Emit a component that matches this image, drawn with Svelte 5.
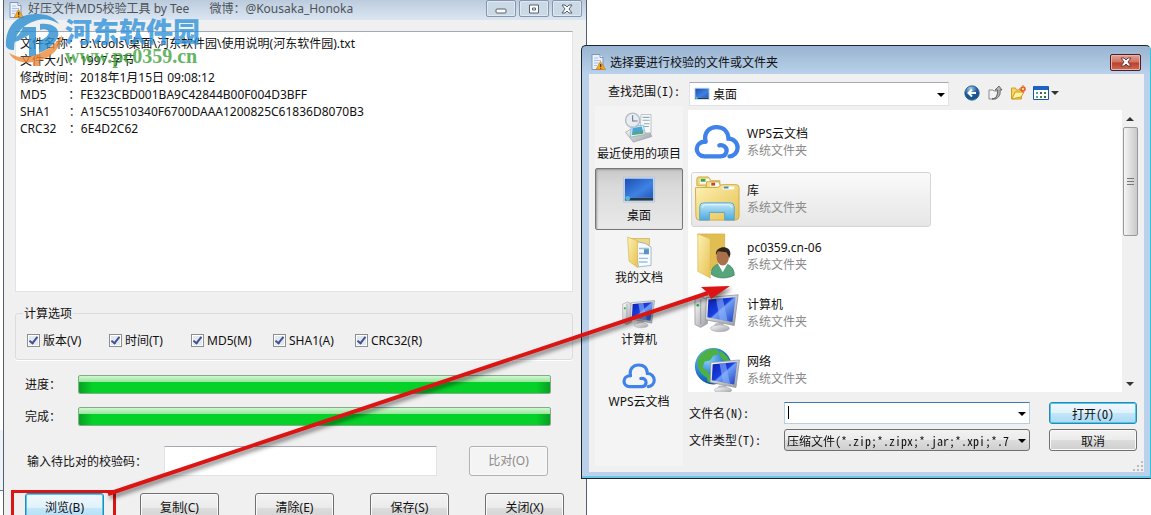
<script lang="ts">
	let checks = $state([
		{ id: 'version', text: '版本(V)', on: true },
		{ id: 'time', text: '时间(T)', on: true },
		{ id: 'md5', text: 'MD5(M)', on: true },
		{ id: 'sha1', text: 'SHA1(A)', on: true },
		{ id: 'crc32', text: 'CRC32(R)', on: true }
	])

	const result = [
		'文件名称：D:\\tools\\桌面\\河东软件园\\使用说明(河东软件园).txt',
		'文件大小：1997 字节',
		'修改时间：2018年1月15日 09:08:12',
		'MD5       ：FE323CBD001BA9C42844B00F004D3BFF',
		'SHA1      ：A15C5510340F6700DAAA1200825C61836D8070B3',
		'CRC32    ：6E4D2C62'
	].join('\n')

	const actions = ['浏览(B)', '复制(C)', '清除(E)', '保存(S)', '关闭(X)']

	const places = [
		{ icon: 'recent', text: '最近使用的项目' },
		{ icon: 'desktop', text: '桌面' },
		{ icon: 'docs', text: '我的文档' },
		{ icon: 'computer', text: '计算机' },
		{ icon: 'cloud', text: 'WPS云文档' }
	]

	const files = [
		{ icon: 'cloud', text: 'WPS云文档' },
		{ icon: 'library', text: '库' },
		{ icon: 'user', text: 'pc0359.cn-06' },
		{ icon: 'computer', text: '计算机' },
		{ icon: 'network', text: '网络' }
	]

	let place = $state('desktop')
	let selected = $state('library')
	let code = $state('')
	let filename = $state('')
</script>

<svg class="defs" width="0" height="0" aria-hidden="true">
	<defs>
		<linearGradient id="screen" x1="0" y1="0" x2="1" y2="1">
			<stop offset="0" stop-color="#0a1fae" />
			<stop offset=".45" stop-color="#1a3fe0" />
			<stop offset=".5" stop-color="#6f9df5" />
			<stop offset="1" stop-color="#1c3fc4" />
		</linearGradient>
		<linearGradient id="desk" x1="0" y1="0" x2="1" y2="1">
			<stop offset="0" stop-color="#1c4fb4" />
			<stop offset=".6" stop-color="#3f82e4" />
			<stop offset="1" stop-color="#2259b8" />
		</linearGradient>
		<linearGradient id="folder" x1="0" y1="0" x2="1" y2="1">
			<stop offset="0" stop-color="#fdf1b4" />
			<stop offset="1" stop-color="#e6c252" />
		</linearGradient>
		<linearGradient id="glass" x1="0" y1="0" x2="0" y2="1">
			<stop offset="0" stop-color="#c3e9fa" />
			<stop offset="1" stop-color="#4ea9dc" />
		</linearGradient>
		<linearGradient id="metal" x1="0" y1="0" x2="1" y2="1">
			<stop offset="0" stop-color="#ffffff" />
			<stop offset="1" stop-color="#989ca2" />
		</linearGradient>
		<radialGradient id="globe" cx=".35" cy=".3" r=".8">
			<stop offset="0" stop-color="#8fd6ff" />
			<stop offset=".6" stop-color="#2277d0" />
			<stop offset="1" stop-color="#103c8c" />
		</radialGradient>
		<radialGradient id="ball" cx=".4" cy=".2" r=".9">
			<stop offset="0" stop-color="#a8cdea" />
			<stop offset=".5" stop-color="#1d5d9e" />
			<stop offset=".8" stop-color="#16518a" />
			<stop offset="1" stop-color="#35c6ea" />
		</radialGradient>
	</defs>
</svg>

{#snippet pageIcon()}
	<svg class="page" viewBox="0 0 16 16" aria-hidden="true">
		<path d="M2 .5h8l3 3v12H2z" fill="#e8f1fc" stroke="#7f96b8" />
		<path d="M10 .5v3h3" fill="#fff" stroke="#7f96b8" />
		<path d="M4 4h4M4 6.500h7M4 9h5M4 11.500h3" stroke="#a9c1e2" />
		<path d="M10.500 7.500 15.500 15.500H6z" fill="#f6a821" stroke="#c77a12" stroke-width=".7" />
		<path d="M10.700 10v3M10.700 13.800v1" stroke="#4a3510" stroke-width="1.200" />
	</svg>
{/snippet}

{#snippet monitor()}
	<path d="M22 35l-2 4h13l-3-5z" fill="#b9bdc2" />
	<ellipse cx="27" cy="40" rx="10" ry="3.500" fill="url(#metal)" stroke="#a5a8ad" stroke-width=".6" />
	<path d="M13 8 46 5l-4 32-30-6z" fill="url(#metal)" stroke="#8d9299" stroke-width=".8" />
	<path d="M15 10 43.500 7.500 40 33.500 14 28.500z" fill="url(#screen)" />
	<path d="M23 9.300 30 8.600 35 32.300 27 31z" fill="#8fb5fa" opacity=".6" />
{/snippet}

{#snippet picture(name: string)}
	<svg class="picture" viewBox="0 0 48 48" aria-hidden="true">
		{#if name === 'cloud'}
			<g fill="none" stroke="#3f82ea" stroke-width="4.500" stroke-linecap="round">
				<path d="M26.500 27.500c4-1 8 2 7.500 6-.4 3.500-3 5.500-6.500 5.500H11C.5 38.500-.5 24 12 23.500" />
				<path d="M12 23.500C10 14 16 8.500 23.500 8.500S35.500 13 36 20.500c5 0 9.500 4 9.500 9.500 0 5-4 8.500-8.500 9" />
			</g>
		{:else if name === 'library'}
			<path d="M3 10V3q0-2 2-2h10l3 4h9v6z" fill="#efd579" stroke="#cda944" />
			<path d="M6 3h10v5H6z" fill="#fff" /><path d="M7 3h5v3H7z" fill="#3da347" />
			<path d="M13 12V6h12l3 4h8v4z" fill="#f5df8e" stroke="#cda944" />
			<path d="M17 7h9v4h-9z" fill="#fff" /><path d="M18 7h4v3h-4z" fill="#c6412c" />
			<path d="M1.500 12H25l4-3h15q3 0 3 3v30q0 4-4 4H5q-3 0-3-4z" fill="url(#folder)" stroke="#d1ac42" />
			<path d="M30 11h12v3H30z" fill="#fff" /><path d="M31 11h5v2h-5z" fill="#3a87ca" />
			<path d="M6 46V32q0-4 4-4h28q4 0 4 4v14H32v-8H16v8z" fill="url(#glass)" stroke="#5aa5cf" />
			<path d="M9 33q0-3 3-3h24q3 0 3 3" fill="none" stroke="#e8f8ff" />
		{:else if name === 'user'}
			<path d="M4 1h28v38H15z" fill="#e2bd51" stroke="#cfa941" stroke-width=".7" />
			<path d="M4 1 17 6v41L4 40z" fill="url(#folder)" stroke="#d7b753" stroke-width=".7" />
			<path d="M18 43c0-8 5-11 12-11s12 4 12 12c-7 4-18 4-24-1z" fill="#56a57c" stroke="#36785a" stroke-width=".7" />
			<path d="m25 32 5 9 5-9-2-4h-6z" fill="#fff" />
			<ellipse cx="30" cy="25" rx="6.500" ry="9" fill="#a8704b" />
			<path d="M23 23c-2-9 15-12 15-1l-1 4-3-6-9-1z" fill="#30251e" />
		{:else if name === 'computer'}
			<path d="M1 10 8 7l6 3v25l-7 4-6-3z" fill="url(#metal)" stroke="#999" stroke-width=".8" />
			<path d="M7 10v26" stroke="#888" stroke-width=".7" />
			<circle cx="4" cy="16" r="1.500" fill="#30ae58" />
			{@render monitor()}
		{:else if name === 'network'}
			<circle cx="20" cy="20" r="19" fill="url(#globe)" />
			<path d="M4 13C8 4 16 1 24 2l3 5-7 2-3 5-6 1-2 6 6 5-2 6-6-5c-3-5-4-9-3-14zM27 4c6 3 10 8 11 13l-6-2-5-5zM13 27l7 2 1 9-7-2z" fill="#4cb044" />
			<g transform="translate(6 9) scale(.9)">{@render monitor()}</g>
		{:else if name === 'desktop'}
			<path d="M2 6h44v35H2z" fill="#d5e3f0" stroke="#a9bed4" />
			<path d="M4 8h40v27H4z" fill="url(#desk)" />
			<path d="M4 35h40v4H4z" fill="#24384e" />
			<circle cx="8" cy="36" r="3.500" fill="#52b6d8" />
		{:else if name === 'docs'}
			<path d="M11 5h28l-2 34-12 4z" fill="#eed989" stroke="#c9ac52" />
			<path d="M19 9l14 3 8 5v26l-18 2z" fill="#f5fbff" stroke="#8b9db1" />
			<path d="M24 19h14M24 26h14M24 33h13M24 38h12" stroke="#a1bdd9" stroke-width="2" />
			<path d="M31 20h7v7h-7z" fill="#5a8ec4" />
			<path d="M8 3 22 8v38L10 37z" fill="url(#folder)" stroke="#d7b753" />
		{:else}
			<path d="m5 30 11 14 26-8-4-10-17-5z" fill="url(#metal)" stroke="#9da1a6" />
			<path d="M27 5h14v26H25z" fill="#f7faf8" stroke="#a5b0b5" />
			<path d="M29 9h10M29 13h10M31 18h8M31 22h7" stroke="#91abb6" stroke-width="1.500" />
			<path d="m13 22 17-2 3 13-21 4z" fill="#d7f2fd" stroke="#81a8b8" />
			<path d="m15 24 13-2 2 9-16 3z" fill="#4aa4dc" />
			<path d="m14 34 6-6 4 3 6-5v6z" fill="#5fa56a" />
			<circle cx="15" cy="13" r="10" fill="#e6ecf1" stroke="#b4bcc4" stroke-width="2" />
			<path d="M15 6v8h7" fill="none" stroke="#687986" stroke-width="1.500" />
		{/if}
	</svg>
{/snippet}

<div class="screen">
	<div class="behind"></div>

	<main class="window">
		<header class="bar">
			{@render pageIcon()}
			<h1>好压文件MD5校验工具 by Tee</h1>
			<span class="author">微博：@Kousaka_Honoka</span>
			<div class="controls">
				<button aria-label="最小化">
					<svg viewBox="0 0 12 10"><rect x="1" y="5" width="10" height="4" rx="1" fill="#fff" stroke="#56606e" /></svg>
				</button>
				<button aria-label="最大化">
					<svg viewBox="0 0 12 10"><path d="M1.500 1h9v8h-9zM4.500 4h3v2h-3z" fill="#fff" stroke="#56606e" /></svg>
				</button>
				<button aria-label="关闭">
					<svg viewBox="0 0 12 10"><path d="M1 1h3l2 2 2-2h3L8 5l3 4H8L6 7 4 9H1l3-4z" fill="#fff" stroke="#56606e" /></svg>
				</button>
			</div>
		</header>

		<div class="client">
			<textarea class="result" aria-label="结果" readonly value={result}></textarea>

			<fieldset>
				<legend>计算选项</legend>
				{#each checks as check}
					<label for={check.id}>
						<input id={check.id} type="checkbox" bind:checked={check.on} />
						{check.text}
					</label>
				{/each}
			</fieldset>

			<div class="progress">
				<label for="current">进度：</label>
				<progress id="current" max="100" value="100"></progress>
				<label for="total">完成：</label>
				<progress id="total" max="100" value="100"></progress>
			</div>

			<div class="compare">
				<label for="code">输入待比对的校验码：</label>
				<input id="code" type="text" bind:value={code} />
				<button class="btn big" disabled>比对(O)</button>
			</div>

			<div class="actions">
				{#each actions as action, i}
					<button class="btn big" class:primary={i === 0}>{action}</button>
				{/each}
			</div>
		</div>
	</main>

	<div class="watermark">
		<svg viewBox="0 0 58 56" aria-hidden="true">
			<path d="M2 36C1 16 14 3 34 4c10 0 17 4 21 10-8-5-16-6-24-3C18 15 10 24 10 40c-4 0-7-1-8-4z" fill="#2b8fd3" />
			<path d="M19 17h13v29h-7V25l-11 6c-5 2-8-1-8-1 7-2 11-7 13-13z" fill="#2b8fd3" />
			<path d="M36 14c16-2 23 8 15 18-4 5-10 9-16 11V31c9-3 12-9 8-11-2-1-5-1-7 0z" fill="#2b8fd3" />
			<path d="M5 43c10 6 21 5 31 0 9-4 16-9 22-18-1 14-12 23-23 26l1 5h-7v-4C17 54 9 50 5 43z" fill="#ee8a38" />
		</svg>
		<div>
			<strong>河东软件园</strong>
			<span>www.pc0359.cn</span>
		</div>
	</div>

	<section class="dialog" aria-label="选择要进行校验的文件或文件夹">
		<header>
			{@render pageIcon()}
			<h2>选择要进行校验的文件或文件夹</h2>
			<button class="close" aria-label="关闭">
				<svg viewBox="0 0 12 10"><path d="M1 1h3l2 2 2-2h3L8 5l3 4H8L6 7 4 9H1l3-4z" fill="#fff" stroke="#6b3d3d" /></svg>
			</button>
		</header>

		<div class="body">
			<div class="lookin">
				<label for="lookin">查找范围(I):</label>
				<div class="combo">
					<span class="small">{@render picture('desktop')}</span>
					<select id="lookin"><option>桌面</option></select>
				</div>
				<div class="tools">
					<button aria-label="后退">
						<svg viewBox="0 0 16 16"><circle cx="8" cy="8" r="7.200" fill="url(#ball)" stroke="#275680" stroke-width=".8" /><path d="M12 8H5M8 4.500 4.500 8 8 11.500" fill="none" stroke="#fff" stroke-width="2" /></svg>
					</button>
					<button aria-label="向上一级">
						<svg viewBox="0 0 16 16"><path d="M2 5h4l1 1h4l-2 8H2z" fill="#f3f3f3" stroke="#8b8b8b" /><path d="M5 14c5-1 6-4 5.500-9H8l4-4 3 4h-2c1 6-2 9-8 9z" fill="#b4b4b4" stroke="#545454" stroke-width=".8" /></svg>
					</button>
					<button aria-label="新建文件夹">
						<svg viewBox="0 0 16 16"><path d="M1.500 3h4l1 2h5v9h-10z" fill="#f5d663" stroke="#cf9d22" /><path d="m2 14 3-7h9l-3 5z" fill="#fff1a5" stroke="#cf9d22" /><circle cx="13" cy="4" r="2" fill="#ffd97a" stroke="#e8572a" stroke-width="1.500" /><path d="M13 0v1M13 7v1M9 4h1" stroke="#e8572a" /></svg>
					</button>
					<button class="views" aria-label="查看">
						<svg viewBox="0 0 16 16"><path d="M.5 1.500h15v13H.5z" fill="#fff" stroke="#1a56ad" /><path d="M1 1h14v4H1z" fill="#1d62c7" /><path d="M3 7h2v2H3zM3 11h2v2H3z" fill="#48a9a2" /><path d="M7 7h2v2H7zM11 11h2v2h-2z" fill="#555" /><path d="M11 7h2v2h-2zM7 11h2v2H7z" fill="#3d8a46" /></svg>
						<i class="arrow"></i>
					</button>
				</div>
			</div>

			<div class="content">
				<nav>
					{#each places as item}
						<button class:active={place === item.icon} onclick={() => (place = item.icon)}>
							{@render picture(item.icon)}
							<span>{item.text}</span>
						</button>
					{/each}
				</nav>

				<div class="right">
					<div class="listing">
						<div class="files">
							{#each files as file}
								<button class:selected={selected === file.icon} onclick={() => (selected = file.icon)}>
									{@render picture(file.icon)}
									<span>{file.text}<small>系统文件夹</small></span>
								</button>
							{/each}
						</div>
						<div class="scroll">
							<i class="arrow up"></i>
							<div class="thumb"></div>
							<i class="arrow"></i>
						</div>
					</div>

					<div class="fields">
						<label for="filename">文件名(N):</label>
						<div class="combo name">
							<!-- svelte-ignore a11y_autofocus -->
							<input id="filename" type="text" bind:value={filename} autofocus />
							<i class="caret"></i>
						</div>
						<button class="btn primary">打开(O)</button>

						<label for="filetype">文件类型(T):</label>
						<div class="combo type">
							<select id="filetype"><option>压缩文件(*.zip;*.zipx;*.jar;*.xpi;*.7</option></select>
						</div>
						<button class="btn">取消</button>
					</div>
				</div>
			</div>
			<svg class="grip" viewBox="0 0 11 11" aria-hidden="true">
				<path d="M8 0h2v2H8zM4 4h2v2H4zM8 4h2v2H8zM0 8h2v2H0zM4 8h2v2H4zM8 8h2v2H8z" fill="#bcbcbc" />
			</svg>
		</div>
	</section>

	<svg class="marks" aria-hidden="true">
		<path d="M12.500 530V491.500h102V530" fill="none" stroke="#dc1414" stroke-width="3" />
		<g class="pointer" fill="#dc1414">
			<path d="M108 494 708 293" stroke="#dc1414" stroke-width="4" />
			<path d="m701 287 29-1-19 13-3-6z" />
		</g>
	</svg>
</div>

<style>
	:global(body) {
		margin: 0;
		background: #fff;
	}
	.screen {
		position: relative;
		height: 100vh;
		overflow: hidden;
		font: 12px/17px "Noto Sans", "Noto Sans CJK SC", sans-serif;
		color: #111;
	}
	.defs {
		position: absolute;
	}
	button, input, select, textarea {
		font: inherit;
		color: inherit;
		box-sizing: border-box;
		margin: 0;
	}
	button {
		padding: 0;
		border: 0;
		background: none;
	}
	h1, h2 {
		margin: 0;
		font: inherit;
		white-space: nowrap;
	}
	.behind {
		position: absolute;
		top: 430px;
		left: 0;
		width: 4px;
		height: 60px;
		background: #eef3f8;
		border-bottom: 1px solid #777;
	}
	.page {
		width: 16px;
		height: 16px;
		flex: none;
	}

	/* checksum window */
	.window {
		position: absolute;
		top: 0;
		left: 3px;
		width: 582px;
		border: 1px solid #4f5f70;
		border-top: 0;
		background: #f0f0f0;
	}
	.bar {
		display: flex;
		align-items: center;
		height: 20px;
		padding: 0 4px;
		background: linear-gradient(#bccbdc, #dbe6f2);
		color: #4c5359;
		line-height: 16px;
	}
	.bar h1 {
		margin: 0 20px 0 4px;
	}
	.bar h1, .author {
		padding-bottom: 3px;
	}
	.controls {
		display: flex;
		gap: 3px;
		margin-left: auto;
		padding-bottom: 3px;
	}
	.controls button {
		display: grid;
		place-items: center;
		width: 30px;
		height: 17px;
		border: 1px solid #8696aa;
		border-radius: 2px;
		background: #cbd8e6;
		box-shadow: inset 0 0 0 1px #dfe9f3;
	}
	.controls svg, .close svg {
		width: 12px;
		height: 10px;
	}
	.client {
		padding: 11px 13px 0 11px;
	}
	.result {
		display: block;
		width: 100%;
		height: 261px;
		padding: 3px 4px;
		border: 1px solid #e2e3ea;
		border-top-color: #a5a9b2;
		background: #fff;
		resize: none;
		outline: none;
		overflow: hidden;
	}
	fieldset {
		display: flex;
		margin: 13px 0 0;
		padding: 10px 11px;
		border: 1px solid #dcdcdc;
		border-radius: 3px;
		box-shadow: 0 1px #fff;
	}
	legend {
		margin-left: -4px;
		padding: 0 1px;
	}
	fieldset label {
		display: flex;
		align-items: center;
		gap: 3px;
		width: 82px;
		white-space: nowrap;
	}
	fieldset input {
		appearance: none;
		display: grid;
		place-items: center;
		width: 13px;
		height: 13px;
		border: 1px solid #8a8f94;
		background: #e3e8ee;
		box-shadow: inset 0 0 0 1px #fff;
	}
	fieldset input:checked::before {
		content: "";
		width: 3px;
		height: 7px;
		margin-bottom: 2px;
		border: solid #3f5293;
		border-width: 0 2px 2px 0;
		transform: rotate(38deg);
	}
	.progress {
		display: grid;
		grid-template-columns: 53px 1fr;
		row-gap: 13px;
		align-items: center;
		padding: 15px 22px 0 10px;
	}
	progress {
		appearance: none;
		width: 100%;
		height: 19px;
		border: 1px solid #8aa88c;
		border-radius: 2px;
		box-sizing: border-box;
		overflow: hidden;
	}
	progress::-webkit-progress-bar {
		background: #e6e6e6;
	}
	progress::-webkit-progress-value {
		background:
			linear-gradient(#d0f7d0, #96e69c) 0 0 / 100% 6px no-repeat,
			linear-gradient(90deg, #08a024, #05d228 14px calc(100% - 14px), #08a024);
	}
	.compare {
		display: flex;
		align-items: center;
		padding: 20px 25px 0 12px;
	}
	.compare label {
		flex: none;
		width: 137px;
		white-space: nowrap;
	}
	.compare input {
		flex: 1;
		min-width: 0;
		height: 30px;
		margin-right: 32px;
		border: 1px solid #e2e3ea;
		border-top-color: #a5a9b2;
		background: #fff;
	}
	.actions {
		display: flex;
		justify-content: space-between;
		padding: 17px 9px 9px 10px;
	}
	.btn {
		width: 88px;
		height: 22px;
		border: 1px solid #707070;
		border-radius: 3px;
		background: linear-gradient(#f3f3f3, #ebebeb 48%, #dcdcdc 52%, #cfcfcf);
		box-shadow: inset 0 0 0 1px #fafafa;
	}
	.btn.big {
		width: 79px;
		height: 30px;
		padding-bottom: 2px;
		flex: none;
	}
	.btn.primary {
		border-color: #2f87ad;
		background: linear-gradient(#f0f8fc, #e0f2fb 48%, #c5e6f8 52%, #a9daf4);
		box-shadow: inset 0 0 0 1px #49c9f1;
	}
	.btn:disabled {
		border-color: #adb2b5;
		background: #f4f4f4;
		color: #8a8a8a;
	}

	/* site mark over the result box */
	.watermark {
		position: absolute;
		top: 10px;
		left: 4px;
		display: flex;
		gap: 3px;
		opacity: .8;
		pointer-events: none;
	}
	.watermark svg {
		width: 58px;
		height: 56px;
	}
	.watermark strong, .watermark span {
		display: block;
	}
	.watermark strong {
		padding-top: 7px;
		font: 900 27px/28px "Noto Sans CJK SC", sans-serif;
		color: #3093dc;
	}
	.watermark span {
		font: bold 20px/22px "Liberation Serif", serif;
		color: #3fa33c;
	}

	/* file picker */
	.dialog {
		position: absolute;
		top: 45px;
		left: 581px;
		right: 0;
		padding: 0 6px 6px 7px;
		border: 1px solid #1b2630;
		border-right-color: #2cc3e4;
		border-radius: 5px 5px 0 0;
		background: linear-gradient(#99b4d1, #b9d1ea 28px);
		box-shadow: inset 0 -2px #6cc7e4;
	}
	.dialog header {
		display: flex;
		align-items: center;
		gap: 4px;
		height: 28px;
		padding: 4px 3px 0 1px;
		box-sizing: border-box;
	}
	.close {
		display: grid;
		place-items: center;
		width: 31px;
		height: 17px;
		margin-left: auto;
		border: 1px solid #4d1f25;
		border-radius: 2px;
		background: linear-gradient(#e0a498, #d0705f 48%, #bb3e2b 52%, #cf6c52);
		box-shadow: inset 0 0 0 1px #e7b4ab;
	}
	.body {
		position: relative;
		padding: 8px 6px 6px;
		background: #f0f0f0;
		font-family: "Noto Sans Mono CJK SC", "Noto Sans CJK SC", sans-serif;
	}
	.lookin {
		display: flex;
		align-items: center;
		height: 24px;
	}
	.lookin label {
		align-self: flex-start;
		width: 81px;
		padding-left: 13px;
		white-space: nowrap;
		flex: none;
	}
	.combo {
		position: relative;
		flex: 0 1 260px;
		min-width: 0;
		font-family: "Noto Sans", "Noto Sans CJK SC", sans-serif;
	}
	.combo select, .combo input {
		appearance: none;
		display: block;
		width: 100%;
		height: 24px;
		padding: 0 20px 0 23px;
		border: 1px solid #e2e3ea;
		border-top-color: #a5a9b2;
		border-radius: 0;
		background: #fff;
		outline: none;
	}
	.combo::after {
		content: "";
		position: absolute;
		top: calc(50% - 1px);
		right: 4px;
		border: 4px solid transparent;
		border-top-color: #000;
		border-bottom: 0;
		pointer-events: none;
	}
	.small {
		position: absolute;
		top: 4px;
		left: 5px;
		height: 16px;
	}
	.small .picture {
		width: 16px;
		height: 16px;
	}
	.tools {
		display: flex;
		gap: 7px;
		margin-left: 15px;
		padding-bottom: 2px;
	}
	.tools button {
		display: flex;
		align-items: center;
	}
	.tools svg {
		width: 16px;
		height: 16px;
	}
	.arrow {
		border: 4px solid transparent;
		border-top-color: #333;
		border-bottom: 0;
	}
	.arrow.up {
		border-bottom: 4px solid #333;
		border-top: 0;
	}
	.views {
		gap: 2px;
	}
	.content {
		display: flex;
		gap: 5px;
	}
	nav {
		flex: none;
		width: 88px;
		height: 360px;
		background: #f4f4f4;
	}
	nav button {
		display: flex;
		flex-direction: column;
		align-items: center;
		width: 88px;
		height: 62px;
		padding-top: 4px;
		border: 1px solid transparent;
		border-radius: 2px;
		white-space: nowrap;
		font-family: "Noto Sans", "Noto Sans CJK SC", sans-serif;
	}
	nav button.active {
		border-color: #777;
		background: linear-gradient(#c8c8c8, #dadada 30%, #e9e9e9);
		box-shadow: inset 1px 1px 2px #999;
	}
	nav .picture {
		width: 34px;
		height: 34px;
		flex: none;
	}
	.right {
		flex: 1;
		min-width: 0;
		padding-top: 4px;
	}
	.listing {
		display: flex;
		height: 282px;
	}
	.files {
		flex: 1;
		min-width: 0;
		overflow: hidden;
		padding: 5px 3px;
		box-sizing: border-box;
		background: #fff;
	}
	.files button {
		display: flex;
		align-items: center;
		gap: 7px;
		width: 240px;
		height: 55px;
		margin-bottom: 2px;
		padding: 0 2px 2px;
		border: 1px solid transparent;
		border-radius: 3px;
		text-align: left;
		font-family: "Noto Sans", "Noto Sans CJK SC", sans-serif;
	}
	.files button.selected {
		border-color: #d5d5d5;
		background: linear-gradient(#fafafa, #e6e6e6);
	}
	.files .picture {
		width: 46px;
		height: 46px;
		flex: none;
	}
	.files small {
		display: block;
		font-size: 12px;
		color: #8a8a8a;
	}
	.scroll {
		display: flex;
		flex-direction: column;
		align-items: center;
		gap: 6px;
		width: 16px;
		padding: 7px 0 6px;
		box-sizing: border-box;
	}
	.thumb {
		width: 15px;
		height: 109px;
		box-sizing: border-box;
		border: 1px solid #999;
		border-radius: 2px;
		background:
			repeating-linear-gradient(#777 0 1px, transparent 1px 3px) center / 7px 8px no-repeat,
			linear-gradient(90deg, #f5f5f5, #dedede 50%, #c9c9cd);
		margin-bottom: auto;
	}
	.fields {
		display: grid;
		grid-template-columns: 95px minmax(0, 246px) 88px;
		row-gap: 5px;
		align-items: center;
		padding: 10px 0 0 1px;
	}
	.fields .btn {
		margin-left: 19px;
	}
	.fields label {
		padding-bottom: 2px;
	}
	.fields .combo input {
		height: 22px;
		padding: 0 20px 0 3px;
		border: 1px solid #b5cfe7;
		border-top-color: #3d7bad;
	}
	.fields .combo select {
		height: 22px;
		padding: 0 18px 0 2px;
		border: 1px solid #707070;
		border-radius: 3px;
		background: linear-gradient(#f2f2f2, #ebebeb 48%, #dddddd 52%, #cfcfcf);
		font-family: "Noto Sans Mono CJK SC", "Noto Sans CJK SC", sans-serif;
	}
	.caret {
		position: absolute;
		top: 4px;
		left: 4px;
		width: 1px;
		height: 13px;
		background: #000;
	}
	.name input {
		caret-color: transparent;
	}
	.grip {
		position: absolute;
		right: 0;
		bottom: 0;
		width: 11px;
		height: 11px;
	}

	.marks {
		position: absolute;
		top: 0;
		left: 0;
		width: 100%;
		height: 100%;
		pointer-events: none;
	}
	.pointer {
		filter: drop-shadow(2px 3px 2px rgba(0, 0, 0, .5));
	}
</style>
